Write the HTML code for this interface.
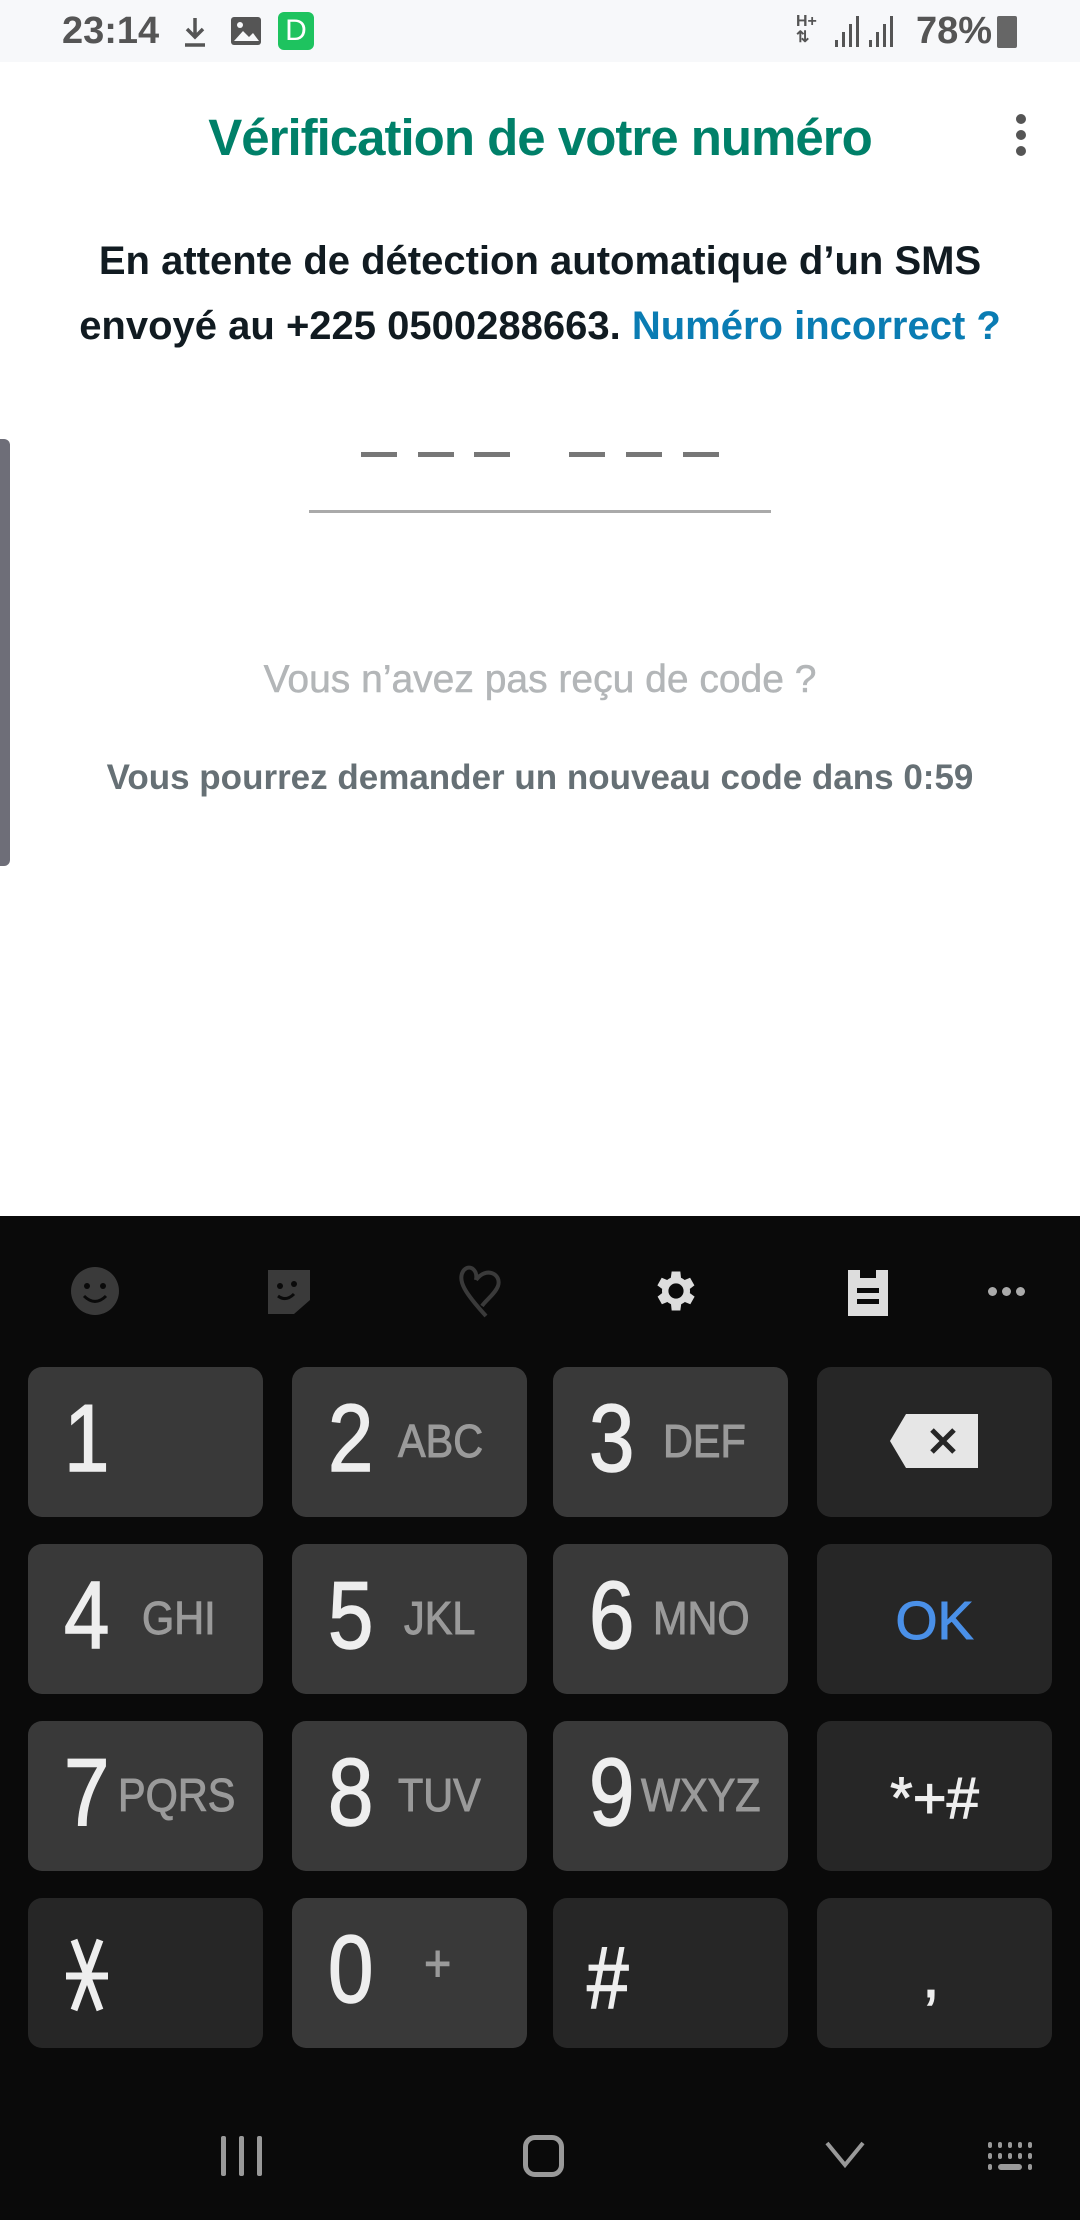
<!DOCTYPE html>
<html><head><meta charset="utf-8"><style>
*{margin:0;padding:0;box-sizing:border-box}
body{width:1080px;height:2220px;position:relative;background:#fff;font-family:"Liberation Sans",sans-serif;overflow:hidden}
.a{position:absolute}
.sb{left:0;top:0;width:1080px;height:62px;background:#f7f8fa}
.kb{left:0;top:1216px;width:1080px;height:1004px;background:#0a0a0a}
.k{position:absolute;width:235px;height:150px;border-radius:14px;background:#393939;color:#eee}
.d{background:#262626}
.n{position:absolute;top:22px;font-size:96px;line-height:100px;color:#eee;transform:scaleX(.85);transform-origin:left;-webkit-text-stroke:1.5px #eee}
.l{position:absolute;top:48px;font-size:46px;line-height:52px;color:#9a9a9a;transform:scaleX(.9);transform-origin:left;-webkit-text-stroke:1px #9a9a9a}
.c{text-align:center;width:100%;left:0}
</style></head><body>
<div class="a sb"></div>
<div class="a" style="left:62px;top:10px;font-size:38px;font-weight:bold;color:#555">23:14</div>
<svg class="a" style="left:182px;top:16px" width="26" height="32" viewBox="0 0 26 32"><path d="M13 2v18M5 13l8 8 8-8M3 29h20" stroke="#555" stroke-width="3.5" fill="none"/></svg>
<svg class="a" style="left:230px;top:16px" width="32" height="30"><rect x="1" y="1" width="30" height="28" rx="3" fill="#555"/><path d="M4 25l9-10 6 6 4-4 6 8z" fill="#f7f8fa"/><circle cx="10" cy="9" r="3" fill="#f7f8fa"/></svg>
<div class="a" style="left:278px;top:12px;width:36px;height:38px;border-radius:6px;background:#1ec35f;color:#fff;font-size:30px;text-align:center;line-height:38px">D</div>
<div class="a" style="left:796px;top:14px;font-size:16px;font-weight:bold;color:#555;line-height:16px">H+<br>⇅</div>
<svg class="a" style="left:833px;top:14px;width:70px;height:34px"><g fill="#555"><rect x="2" y="26" width="3" height="7"/><rect x="9" y="18" width="3" height="15"/><rect x="16" y="10" width="3" height="23"/><rect x="23" y="2" width="3" height="31"/><rect x="36" y="26" width="3" height="7"/><rect x="43" y="18" width="3" height="15"/><rect x="50" y="10" width="3" height="23"/><rect x="57" y="2" width="3" height="31"/></g></svg>
<div class="a" style="left:916px;top:10px;font-size:38px;font-weight:bold;color:#555">78%</div>
<div class="a" style="left:997px;top:16px;width:20px;height:32px;background:#666;border-radius:2px"></div>

<div class="a c" style="top:108px;font-size:51px;font-weight:bold;color:#008069;letter-spacing:-1px">Vérification de votre numéro</div>
<div class="a" style="left:1016px;top:114px;width:10px;height:10px;border-radius:5px;background:#555;box-shadow:0 16px 0 #555,0 32px 0 #555"></div>

<div class="a c" style="top:229px;font-size:40px;font-weight:bold;color:#111b21;line-height:65px">En attente de détection automatique d’un SMS<br>envoyé au +225 0500288663. <span style="color:#0a7cb3">Numéro incorrect ?</span></div>

<div class="a" style="left:361px;top:452px;width:36px;height:5px;background:#777;box-shadow:57px 0 0 #777,113px 0 0 #777,208px 0 0 #777,265px 0 0 #777,322px 0 0 #777"></div>
<div class="a" style="left:309px;top:510px;width:462px;height:3px;background:#aaa"></div>

<div class="a c" style="top:658px;font-size:39px;color:#b3b6b8;-webkit-text-stroke:.5px #b3b6b8">Vous n’avez pas reçu de code ?</div>
<div class="a c" style="top:758px;font-size:35px;font-weight:bold;color:#667075">Vous pourrez demander un nouveau code dans 0:59</div>
<div class="a" style="left:0;top:439px;width:10px;height:427px;background:#6e6e78;border-radius:0 6px 6px 0"></div>

<div class="a kb"></div>
<svg class="a" style="left:70px;top:1266px" width="50" height="50"><circle cx="25" cy="25" r="24" fill="#3a3a3a"/><circle cx="17" cy="20" r="3" fill="#0a0a0a"/><circle cx="33" cy="20" r="3" fill="#0a0a0a"/><path d="M14 30q11 11 22 0" stroke="#0a0a0a" stroke-width="3" fill="none"/></svg>
<svg class="a" style="left:264px;top:1266px" width="50" height="50"><path d="M4 4h42v30L30 48H4z" fill="#3a3a3a"/><circle cx="16" cy="20" r="3" fill="#0a0a0a"/><circle cx="30" cy="18" r="3" fill="#0a0a0a"/><path d="M14 30q8 6 16-2" stroke="#0a0a0a" stroke-width="3" fill="none"/></svg>
<svg class="a" style="left:456px;top:1264px" width="54" height="56"><path d="M30 52C10 30 0 16 8 6c6-6 14 0 12 10M20 16c10-14 26-6 22 6-3 8-12 14-16 20" stroke="#3a3a3a" stroke-width="4" fill="none"/></svg>
<svg class="a" style="left:650px;top:1265px" width="52" height="52" viewBox="0 0 24 24"><path fill="#ddd" d="M19.4 13a7.5 7.5 0 000-2l2.1-1.6-2-3.5-2.5 1a7 7 0 00-1.7-1L15 3h-4l-.4 2.9a7 7 0 00-1.7 1l-2.5-1-2 3.5L6.6 11a7.5 7.5 0 000 2l-2.1 1.6 2 3.5 2.5-1a7 7 0 001.7 1L11 21h4l.4-2.9a7 7 0 001.7-1l2.5 1 2-3.5zM13 15.5a3.5 3.5 0 110-7 3.5 3.5 0 010 7z" transform="translate(-1 0)"/></svg>
<svg class="a" style="left:846px;top:1266px" width="44" height="52"><path d="M2 4h12v8h16V4h12v46H2z" fill="#ddd"/><rect x="11" y="22" width="22" height="5" fill="#0a0a0a"/><rect x="11" y="33" width="22" height="5" fill="#0a0a0a"/></svg>
<div class="a" style="left:988px;top:1287px;width:9px;height:9px;border-radius:5px;background:#aaa;box-shadow:14px 0 0 #aaa,28px 0 0 #aaa"></div>

<div class="k" style="left:28px;top:1367px"><span class="n" style="left:36px">1</span></div>
<div class="k" style="left:292px;top:1367px"><span class="n" style="left:36px">2</span><span class="l" style="left:106px">ABC</span></div>
<div class="k" style="left:553px;top:1367px"><span class="n" style="left:36px">3</span><span class="l" style="left:110px">DEF</span></div>
<div class="k d" style="left:817px;top:1367px"><svg style="position:absolute;left:71px;top:45px" width="92" height="58"><path d="M18 2h72v54H18L2 29z" fill="#e6e6e6"/><path d="M44 18l22 22M66 18L44 40" stroke="#262626" stroke-width="5"/></svg></div>
<div class="k" style="left:28px;top:1544px"><span class="n" style="left:36px">4</span><span class="l" style="left:114px">GHI</span></div>
<div class="k" style="left:292px;top:1544px"><span class="n" style="left:36px">5</span><span class="l" style="left:112px">JKL</span></div>
<div class="k" style="left:553px;top:1544px"><span class="n" style="left:36px">6</span><span class="l" style="left:100px">MNO</span></div>
<div class="k d" style="left:817px;top:1544px"><span style="position:absolute;left:0;width:235px;text-align:center;top:46px;font-size:54px;color:#4a90e8;-webkit-text-stroke:1px #4a90e8">OK</span></div>
<div class="k" style="left:28px;top:1721px"><span class="n" style="left:36px">7</span><span class="l" style="left:90px">PQRS</span></div>
<div class="k" style="left:292px;top:1721px"><span class="n" style="left:36px">8</span><span class="l" style="left:106px">TUV</span></div>
<div class="k" style="left:553px;top:1721px"><span class="n" style="left:36px">9</span><span class="l" style="left:88px">WXYZ</span></div>
<div class="k d" style="left:817px;top:1721px"><span style="position:absolute;left:0;width:235px;text-align:center;top:44px;font-size:58px;color:#eee;-webkit-text-stroke:1px #eee">*+#</span></div>
<div class="k d" style="left:28px;top:1898px"><svg style="position:absolute;left:34px;top:40px" width="50" height="74"><path d="M12 2l26 70M38 2L12 72M4 38h42" stroke="#eee" stroke-width="7"/></svg></div>
<div class="k" style="left:292px;top:1898px"><span class="n" style="left:36px">0</span><span class="l" style="left:132px;top:40px;font-size:52px">+</span></div>
<div class="k d" style="left:553px;top:1898px"><span class="n" style="left:34px;font-size:88px;top:30px">#</span></div>
<div class="k d" style="left:817px;top:1898px"><span style="position:absolute;left:105px;top:40px;font-size:64px;color:#eee;-webkit-text-stroke:1px #eee">,</span></div>

<div class="a" style="left:221px;top:2136px;width:5px;height:40px;background:#999;box-shadow:18px 0 0 #999,36px 0 0 #999;border-radius:2px"></div>
<div class="a" style="left:523px;top:2135px;width:41px;height:42px;border:5px solid #999;border-radius:12px"></div>
<svg class="a" style="left:824px;top:2140px" width="42" height="30"><path d="M3 3l18 22L39 3" stroke="#999" stroke-width="4" fill="none"/></svg>
<svg class="a" style="left:988px;top:2142px" width="50" height="30"><g fill="#999"><rect x="0" y="0" width="4" height="6" rx="2"/><rect x="10" y="0" width="4" height="6" rx="2"/><rect x="20" y="0" width="4" height="6" rx="2"/><rect x="30" y="0" width="4" height="6" rx="2"/><rect x="40" y="0" width="4" height="6" rx="2"/><rect x="0" y="11" width="4" height="6" rx="2"/><rect x="10" y="11" width="4" height="6" rx="2"/><rect x="20" y="11" width="4" height="6" rx="2"/><rect x="30" y="11" width="4" height="6" rx="2"/><rect x="40" y="11" width="4" height="6" rx="2"/><rect x="0" y="22" width="4" height="6" rx="2"/><rect x="10" y="22" width="24" height="6" rx="3"/><rect x="40" y="22" width="4" height="6" rx="2"/></g></svg>
</body></html>
